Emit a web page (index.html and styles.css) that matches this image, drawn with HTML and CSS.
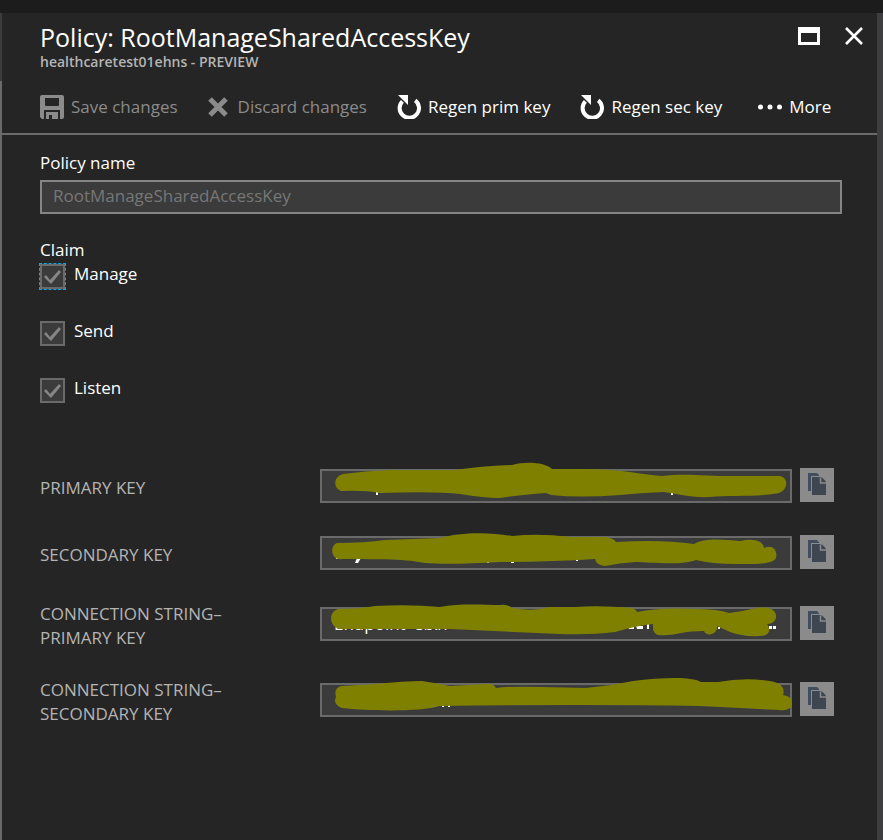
FILE: index.html
```html
<!DOCTYPE html>
<html lang="en">
<head>
<meta charset="utf-8">
<title>Policy: RootManageSharedAccessKey</title>
<link rel="stylesheet" href="styles.css">
</head>
<body>
<svg class="defs" aria-hidden="true">
  <symbol id="regen" viewBox="0 0 24 24">
    <path d="M5.4 6.3A9.7 9.7 0 1 0 18.2 5.4" fill="none" stroke="currentColor" stroke-width="4"/>
    <path d="M1 0H11V10Z" fill="currentColor"/>
  </symbol>
  <symbol id="copy" viewBox="0 0 34 34">
    <path d="M8 5H17L19 7V8H11V23H8Z" fill="#424e5e"/>
    <path d="M12 9H21L26 14V27H12Z" fill="#3e4651"/>
    <path d="M20.500 9.500V15H26" fill="none" stroke="#8b8b8b" stroke-width="1.500"/>
    <path d="M22 9.500L26 13.500H22Z" fill="#3e4651"/>
  </symbol>
</svg>
<main class="blade">
  <header class="head">
    <div class="titles">
      <h1>Policy: RootManageSharedAccessKey</h1>
      <p>healthcaretest01ehns - PREVIEW</p>
    </div>
    <div class="window-buttons">
      <button type="button" aria-label="Maximize"><svg width="22" height="18" viewBox="0 0 22 18"><path fill="currentColor" fill-rule="evenodd" d="M0 0H22V18H0ZM3 6V15H19V6Z"/></svg></button>
      <button type="button" aria-label="Close"><svg width="18" height="18" viewBox="0 0 18 18"><path d="M1 1L17 17M17 1L1 17" stroke="currentColor" stroke-width="2.600"/></svg></button>
    </div>
  </header>
  <nav class="commands">
    <button type="button" disabled><svg width="24" height="24" viewBox="0 0 24 24"><path fill="currentColor" fill-rule="evenodd" d="M2 0H22Q24 0 24 2V22Q24 24 22 24H20V15H4V24H2L0 22V2Q0 0 2 0ZM5 3V10Q5 11 6 11H18Q19 11 19 10V3ZM6 17H18V24H12V20H9V24H6Z"/></svg><span>Save changes</span></button>
    <button type="button" class="discard" disabled><svg width="20" height="20" viewBox="0 0 20 20"><path d="M2 2L18 18M18 2L2 18" stroke="currentColor" stroke-width="5"/></svg><span>Discard changes</span></button>
    <button type="button" class="regen"><svg width="24" height="24"><use href="#regen"/></svg><span>Regen prim key</span></button>
    <button type="button" class="regen"><svg width="24" height="24"><use href="#regen"/></svg><span>Regen sec key</span></button>
    <button type="button" class="more"><svg width="24" height="6" viewBox="0 0 24 6" fill="currentColor"><circle cx="2.500" cy="3" r="2.500"/><circle cx="12" cy="3" r="2.500"/><circle cx="21.500" cy="3" r="2.500"/></svg><span>More</span></button>
  </nav>
  <form class="content">
    <label class="caption" for="policy">Policy name</label>
    <input class="policy" id="policy" type="text" value="RootManageSharedAccessKey" disabled>
    <fieldset class="claims">
      <legend>Claim</legend>
      <label class="claim focused"><input type="checkbox" checked disabled><span>Manage</span></label>
      <label class="claim"><input type="checkbox" checked disabled><span>Send</span></label>
      <label class="claim"><input type="checkbox" checked disabled><span>Listen</span></label>
    </fieldset>
    <div class="keys">
      <div class="key">
        <label for="k1">PRIMARY KEY</label>
        <div class="field"><input id="k1" type="text" readonly>
          <svg class="mark" viewBox="320 459 472 54" preserveAspectRatio="none"><path fill="#fff" d="M376 490H378V495H376ZM671 492H673V495H671Z"/><path d="M343 474Q365 471 390 470H455Q482 466 512 465C525 461 545 462 552 469H582Q610 469 630 472Q650 475 662 476C680 473 710 476 730 476H780C789 478 788 490 779 493C760 497 730 495 710 497C690 498 675 493 663 492Q640 493 620 495Q580 498 551 495L546 493Q520 495 500 498Q484 498 460 494Q435 491 380 493Q365 490 341 491C333 488 333 477 343 474Z"/></svg></div>
        <button type="button" aria-label="Copy primary key"><svg width="34" height="34"><use href="#copy"/></svg></button>
      </div>
      <div class="key">
        <label for="k2">SECONDARY KEY</label>
        <div class="field"><input id="k2" type="text" readonly>
          <svg class="mark" viewBox="320 525 472 54" preserveAspectRatio="none"><path fill="#fff" d="M336 556H353V558H336ZM357 557H361L358 562H355ZM471 561H477V562H471ZM487 561H489V562H487ZM511 561H514V562H511ZM576 558H578V560H576Z"/><path d="M337 542Q365 542 385 539L440 537C460 531 490 531 512 535Q540 532 570 536H605Q614 537 616 541Q660 538 694 543C706 536 725 539 740 540C753 537 763 539 764 547C772 543 778 549 776 557C773 564 750 563 735 563Q712 563 696 559C681 565 650 561 635 561Q620 562 605 565Q596 564 595 558Q550 561 500 561Q450 564 425 562C400 557 375 559 338 558C330 555 331 544 337 542Z"/></svg></div>
        <button type="button" aria-label="Copy secondary key"><svg width="34" height="34"><use href="#copy"/></svg></button>
      </div>
      <div class="key tall">
        <label for="k3">CONNECTION STRING–<br>PRIMARY KEY</label>
        <div class="field"><input id="k3" type="text" value="Endpoint=sb://" readonly>
          <svg class="mark" viewBox="320 597 472 54" preserveAspectRatio="none"><path fill="#fff" d="M628 626H634V629H629ZM636 626H643V629H637ZM647 624H649V629H647ZM718 627H720V629H718ZM723 627H725V629H723ZM769 626H772V629H769ZM773 626H776V629H773Z"/><path d="M338 609Q360 609 375 606Q410 604 440 607C460 603 485 605 500 605Q508 604 512 608Q534 612 550 607H575Q600 605 632 608Q636 609 637 612Q660 607 695 609Q718 609 729 613Q744 611 757 608C771 606 777 611 776 618Q774 624 767 624C772 631 768 636 760 636Q743 637 730 632L717 626C718 635 706 637 704 631Q690 631 681 633Q668 636 658 635Q652 633 653 624Q635 626 615 632Q590 635 560 634L450 629H340C329 627 328 612 338 609Z"/></svg></div>
        <button type="button" aria-label="Copy primary connection string"><svg width="34" height="34"><use href="#copy"/></svg></button>
      </div>
      <div class="key tall">
        <label for="k4">CONNECTION STRING–<br>SECONDARY KEY</label>
        <div class="field"><input id="k4" type="text" readonly>
          <svg class="mark" viewBox="320 673 472 54" preserveAspectRatio="none"><path fill="#fff" d="M442 705H444V707H442ZM448 705H450V707H448ZM571 704H575V705H571ZM582 704H585V705H582ZM590 703H622V705H590ZM626 703H642V705H626ZM645 703H652V705H645ZM658 703H665V705H658ZM669 703H679V705H669Z"/><path d="M342 686Q360 685 375 684Q405 681 422 681Q436 683 450 686L485 684Q493 683 496 688Q510 686 540 687L586 688Q610 686 633 681C660 678 690 676 701 682H718Q745 677 770 681C783 683 785 690 783 695C792 696 794 703 790 708Q786 711 779 710L700 706Q580 704 440 706C420 712 370 711 342 708C333 704 335 699 336 697C334 690 337 687 342 686Z"/></svg></div>
        <button type="button" aria-label="Copy secondary connection string"><svg width="34" height="34"><use href="#copy"/></svg></button>
      </div>
    </div>
  </form>
</main>
</body>
</html>
```
FILE: styles.css
```css
* { box-sizing: border-box; }
body {
  margin: 0;
  min-height: 100vh;
  display: flex;
  flex-direction: column;
  border-top: 13px solid #1c1c1c;
  background: #252525;
  color: #fff;
  font-family: "Segoe UI", "Open Sans", sans-serif;
  font-size: 17px;
  line-height: 24px;
}
.defs { position: absolute; width: 0; height: 0; }
.blade {
  flex: 1;
  display: flex;
  flex-direction: column;
  border-right: 6px solid #3e3e40;
}
h1, p { margin: 0; }
button {
  display: flex;
  align-items: center;
  padding: 0;
  border: 0;
  background: none;
  color: inherit;
  font: inherit;
  white-space: nowrap;
}
.head {
  display: flex;
  justify-content: space-between;
  height: 68px;
  padding: 8px 14px 0 38px;
  border-left: 2px solid #3c3c3c;
}
h1 { font-size: 25px; font-weight: 400; line-height: 32px; }
.head p { color: #b4b4b4; font-size: 14px; font-weight: 600; line-height: 18px; }
.window-buttons { display: flex; gap: 25px; height: 30px; }
.commands {
  display: flex;
  gap: 30px;
  height: 54px;
  padding-left: 38px;
  border-left: 2px solid #6a6a6a;
  border-bottom: 2px solid #6a6a6a;
}
.commands button { gap: 7px; }
.commands button:disabled { color: #8b8b8b; }
.commands .discard { gap: 10px; }
.commands .more { margin-left: 6px; }
.content {
  flex: 1;
  padding: 16px 35px 0 38px;
  border-left: 2px solid #6a6a6a;
}
.caption { display: block; height: 29px; }
.policy {
  display: block;
  width: 100%;
  height: 34px;
  padding: 0 11px 3px;
  border: 2px solid #858585;
  background: #3b3b3b;
  color: #777;
  font: inherit;
}
.claims { margin: 24px 0 0; padding: 0; border: 0; }
legend { padding: 0; }
.claim { display: flex; gap: 9px; width: fit-content; height: 57px; padding-top: 2px; }
.claim span { margin-top: -2px; }
.claim input {
  appearance: none;
  width: 25px;
  height: 25px;
  margin: 0;
  border: 2px solid #6a6a6a;
  background: #3b3b3b;
}
.claim input::before {
  content: "";
  display: block;
  width: 21px;
  height: 21px;
  background: #858585;
  clip-path: polygon(2px 11px, 4px 9px, 8px 14px, 17px 4px, 19px 6px, 9px 18px);
}
.focused input { outline: 1px dashed #00abec; }
.keys { display: grid; gap: 28px; margin: 35px 8px 0 0; }
.key {
  display: grid;
  grid-template-columns: 280px 1fr 34px;
  align-items: start;
  min-height: 39px;
  color: #b4b4b4;
}
.key label { padding-top: 8px; }
.tall label { padding-top: 0; }
.field { position: relative; margin: 1px 8px 0 0; }
.tall .field { margin-top: 5px; }
.field input {
  display: block;
  width: 100%;
  height: 34px;
  padding: 0 12px 2px;
  border: 2px solid #6a6a6a;
  background: #3b3b3b;
  color: #fff;
  font: inherit;
}
.mark {
  position: absolute;
  top: -10px;
  left: 0;
  width: 100%;
  height: 54px;
  fill: #808000;
  pointer-events: none;
}
.key button { height: 34px; background: #8b8b8b; }
.tall button { margin-top: 4px; }
```
